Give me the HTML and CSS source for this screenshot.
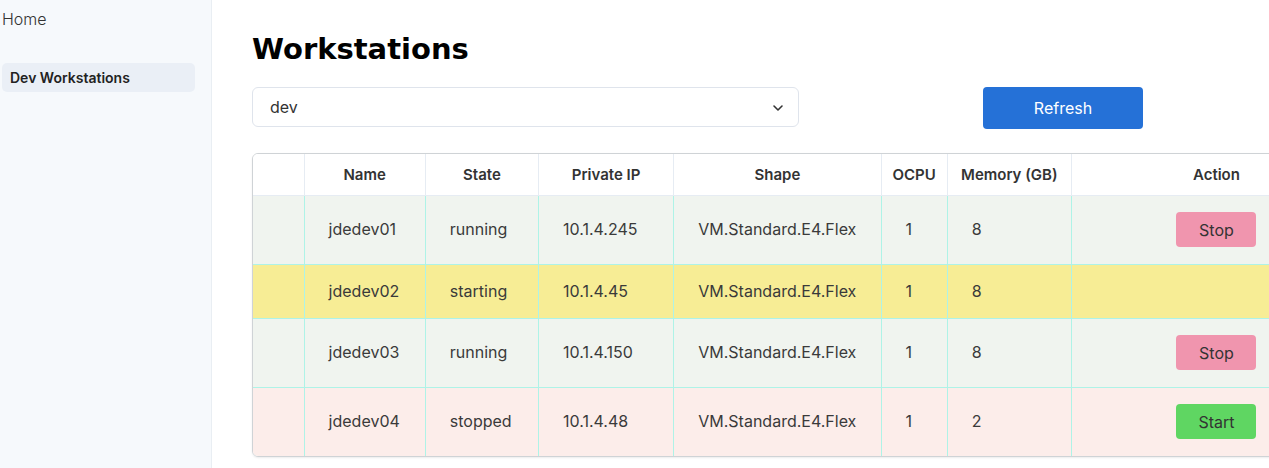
FILE: index.html
```html
<!DOCTYPE html>
<html>
<head>
<meta charset="utf-8">
<link rel="stylesheet" href="styles.css">
</head>
<body>
<div class="app">
  <aside class="sidebar">
    <div class="nav-home">Home</div>
    <div class="nav-item active">Dev Workstations</div>
  </aside>
  <main class="main">
    <h1 class="title">Workstations</h1>
    <div class="controls">
      <div class="select">
        <span>dev</span>
        <svg class="chev" width="12" height="8" viewBox="0 0 12 8"><path d="M2 2 L6 6 L10 2" fill="none" stroke="#333" stroke-width="1.6" stroke-linecap="round" stroke-linejoin="round"/></svg>
      </div>
      <button class="refresh">Refresh</button>
    </div>
    <div class="table-wrap">
      <table class="grid">
        <colgroup>
          <col class="c0"><col class="c1"><col class="c2"><col class="c3"><col class="c4"><col class="c5"><col class="c6"><col class="c7">
        </colgroup>
        <thead>
          <tr><th></th><th>Name</th><th>State</th><th>Private IP</th><th>Shape</th><th>OCPU</th><th>Memory (GB)</th><th>Action</th></tr>
        </thead>
        <tbody>
          <tr class="running"><td></td><td>jdedev01</td><td>running</td><td>10.1.4.245</td><td>VM.Standard.E4.Flex</td><td>1</td><td>8</td><td class="act"><button class="btn stop">Stop</button></td></tr>
          <tr class="starting"><td></td><td>jdedev02</td><td>starting</td><td>10.1.4.45</td><td>VM.Standard.E4.Flex</td><td>1</td><td>8</td><td class="act"></td></tr>
          <tr class="running"><td></td><td>jdedev03</td><td>running</td><td>10.1.4.150</td><td>VM.Standard.E4.Flex</td><td>1</td><td>8</td><td class="act"><button class="btn stop">Stop</button></td></tr>
          <tr class="stopped"><td></td><td>jdedev04</td><td>stopped</td><td>10.1.4.48</td><td>VM.Standard.E4.Flex</td><td>1</td><td>2</td><td class="act"><button class="btn start">Start</button></td></tr>
        </tbody>
      </table>
    </div>
  </main>
</div>
</body>
</html>
```

FILE: styles.css
```css
html, body {
  margin: 0;
  padding: 0;
  overflow: hidden;
  background: #fff;
  font-family: Inter, "Noto Sans", sans-serif;
  color: #333;
}
.app {
  display: flex;
  height: 468px;
}
.sidebar {
  width: 212px;
  flex: none;
  background: #f6f9fc;
  border-right: 1px solid #e9eef3;
  padding: 9px 16px 0 2px;
  box-sizing: border-box;
}
.nav-home {
  font-size: 16px;
  line-height: 20px;
  color: #333;
  font-weight: 300;
}
.nav-item {
  margin-top: 34px;
  width: 193px;
  height: 29px;
  box-sizing: border-box;
  padding: 0 8px;
  display: flex;
  align-items: center;
  font-size: 14px;
  font-weight: 600;
  color: #222;
  border-radius: 5px;
}
.nav-item.active {
  background: #eaeff6;
}
.main {
  flex: 1;
  min-width: 0;
  overflow: hidden;
  padding: 32px 0 0 40px;
}
.title {
  margin: 0 0 21px 0;
  font-family: "DejaVu Sans", sans-serif;
  font-weight: bold;
  font-size: 29px;
  line-height: 34px;
  color: #000;
}
.controls {
  display: flex;
  align-items: flex-start;
  gap: 184px;
  margin-bottom: 24px;
}
.select {
  width: 547px;
  height: 40px;
  box-sizing: border-box;
  border: 1px solid #dfe4ec;
  border-radius: 6px;
  display: flex;
  align-items: center;
  justify-content: space-between;
  padding: 0 14px 0 17px;
  font-size: 16px;
  color: #333;
}
.chev { margin-top: 1px; }
.refresh {
  width: 160px;
  height: 42px;
  border: none;
  border-radius: 4px;
  background: #2571d7;
  color: #fff;
  font-family: Inter, sans-serif;
  font-size: 16px;
}
.table-wrap {
  width: 1108px;
  border: 1px solid #cfd3d6;
  border-radius: 6px;
  overflow: hidden;
  box-shadow: 0 1px 2px rgba(0,0,0,0.08);
}
.grid {
  border-collapse: collapse;
  table-layout: fixed;
  width: 100%;
  font-size: 16px;
}
.c0 { width: 51px; }
.c1 { width: 121px; }
.c2 { width: 113px; }
.c3 { width: 135px; }
.c4 { width: 207px; }
.c5 { width: 66px; }
.c6 { width: 124px; }
.c7 { width: 289px; }
.grid th {
  height: 41px;
  box-sizing: border-box;
  padding: 0 6px;
  font-size: 15px;
  font-weight: 600;
  color: #333;
  text-align: center;
  background: #fff;
  border-left: 1px solid #e6ecf3;
  border-bottom: 1px solid #e6ecf3;
}
.grid th:first-child { border-left: none; }
.grid td {
  padding: 16px 0 16px 24px;
  line-height: 21px;
  color: #3a3a3a;
  text-align: left;
  border-left: 1px solid #aef3e7;
  border-top: 1px solid #aef3e7;
  white-space: nowrap;
}
.grid td:first-child { border-left: none; }
.grid tbody tr:first-child td { border-top: none; }
.grid td.act {
  padding: 16.5px 0;
  text-align: center;
}
tr.running td { background: #f0f4ef; }
tr.starting td { background: #f7ed95; }
tr.stopped td { background: #fcedea; }
.btn {
  width: 80px;
  height: 35px;
  border: none;
  border-radius: 4px;
  font-family: Inter, sans-serif;
  font-size: 16px;
  color: #333;
  vertical-align: middle;
}
.btn.stop { background: #f095ae; }
.btn.start { background: #5fd662; }
```
